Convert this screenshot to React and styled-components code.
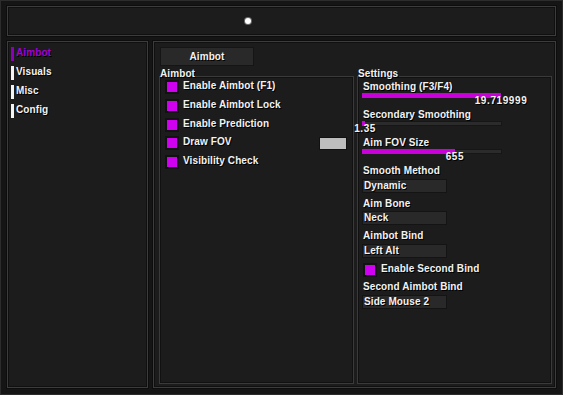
import React from "react";
//Styling
import styled, { createGlobalStyle } from "styled-components";

//Data
const tabs = [
	{ name: "Aimbot", active: true },
	{ name: "Visuals" },
	{ name: "Misc" },
	{ name: "Config" },
];

const toggles = [
	{ label: "Enable Aimbot (F1)" },
	{ label: "Enable Aimbot Lock" },
	{ label: "Enable Prediction" },
	{ label: "Draw FOV", swatch: "#bdbdbd" },
	{ label: "Visibility Check" },
];

const sliders = [
	{ label: "Smoothing (F3/F4)", value: "19.719999", pct: 99.3 },
	{ label: "Secondary Smoothing", value: "1.35", pct: 2.2 },
	{ label: "Aim FOV Size", value: "655", pct: 66.4 },
];

const App = () => {
	return (
		<>
			<GlobalStyle />
			<Window>
				<TopBar>
					<Dot />
				</TopBar>
				<Body>
					<Sidebar>
						{tabs.map((tab) => (
							<NavItem key={tab.name} $active={tab.active}>
								<NavMark $active={tab.active} />
								<span>{tab.name}</span>
							</NavItem>
						))}
					</Sidebar>
					<Main>
						<TabButton>Aimbot</TabButton>
						<Columns>
							<Group>
								<GroupTitle>Aimbot</GroupTitle>
								<GroupBox $pad="3px 6px 0 5px">
									{toggles.map((t) => (
										<CheckRow key={t.label}>
											<Check />
											<Text>{t.label}</Text>
											{t.swatch && <Swatch $color={t.swatch} />}
										</CheckRow>
									))}
								</GroupBox>
							</Group>
							<Group>
								<GroupTitle>Settings</GroupTitle>
								<GroupBox $pad="4px 4px 0 4px">
									{sliders.map((s) => (
										<SliderItem key={s.label}>
											<Text $ml="1px">{s.label}</Text>
											<Track>
												<Fill style={{ width: `${s.pct}%` }} />
												<Value style={{ left: `${s.pct}%` }}>{s.value}</Value>
											</Track>
										</SliderItem>
									))}
									<Field>
										<Text $ml="1px">Smooth Method</Text>
										<Combo>Dynamic</Combo>
									</Field>
									<Field>
										<Text $ml="1px">Aim Bone</Text>
										<Combo>Neck</Combo>
									</Field>
									<Field>
										<Text $ml="1px">Aimbot Bind</Text>
										<Combo>Left Alt</Combo>
									</Field>
									<CheckRow $tight>
										<Check $ml="1px" />
										<Text>Enable Second Bind</Text>
									</CheckRow>
									<Field>
										<Text $ml="1px">Second Aimbot Bind</Text>
										<Combo>Side Mouse 2</Combo>
									</Field>
								</GroupBox>
							</Group>
						</Columns>
					</Main>
				</Body>
			</Window>
		</>
	);
};

const GlobalStyle = createGlobalStyle`
	html, body {
		margin: 0;
		padding: 0;
		background: #151515;
	}
	* {
		box-sizing: border-box;
	}
`;

const Window = styled.div`
	width: 563px;
	height: 395px;
	border: 1px solid #2c2c2c;
	padding: 5px 6px 6px 6px;
	display: flex;
	flex-direction: column;
	gap: 5px;
	background: #151515;
	font-family: "Liberation Sans", Arial, sans-serif;
	font-weight: bold;
	font-size: 10px;
	letter-spacing: 0.1px;
	color: #f2f2f2;
`;

const Panel = styled.div`
	background: #1c1c1c;
	border: 1px solid #3c3c3c;
	box-shadow: inset 0 0 0 1px #101010, 0 0 0 1px #0d0d0d;
`;

const TopBar = styled(Panel)`
	height: 30px;
	display: flex;
	align-items: center;
`;

const Dot = styled.div`
	width: 6px;
	height: 6px;
	margin-left: 237px;
	border-radius: 50%;
	background: #ffffff;
	box-shadow: 0 0 0 1px #6a6a6a;
`;

const Body = styled.div`
	flex: 1;
	display: flex;
	gap: 5px;
	min-height: 0;
`;

const Sidebar = styled(Panel)`
	width: 141px;
	padding: 5px 3px;
	display: flex;
	flex-direction: column;
	gap: 5px;
`;

const NavItem = styled.div`
	height: 14px;
	display: flex;
	align-items: flex-start;
	gap: 2px;
	line-height: 12px;
	color: ${(p) => (p.$active ? "#a600d6" : "#f2f2f2")};
	text-shadow: 1px 1px 0 #000;
`;

const NavMark = styled.div`
	width: 3px;
	height: 14px;
	background: ${(p) => (p.$active ? "#8e00b8" : "#f4f4f4")};
`;

const Main = styled(Panel)`
	flex: 1;
	padding: 5px 3px 3px 5px;
	display: flex;
	flex-direction: column;
`;

const TabButton = styled.div`
	width: 94px;
	height: 19px;
	margin-left: 1px;
	background: #292929;
	border: 1px solid #151515;
	text-align: center;
	line-height: 17px;
	text-shadow: 1px 1px 0 #000;
`;

const Columns = styled.div`
	flex: 1;
	margin-top: 2px;
	display: grid;
	grid-template-columns: 195px 195px;
	column-gap: 3px;
	min-height: 0;
`;

const Group = styled.div`
	display: flex;
	flex-direction: column;
`;

const GroupTitle = styled.div`
	position: relative;
	z-index: 1;
	line-height: 12px;
	margin: 0 0 -4px 1px;
	text-shadow: 1px 1px 0 #000;
`;

const GroupBox = styled.div`
	flex: 1;
	border: 1px solid #3a3a3a;
	box-shadow: inset 0 0 0 1px #111;
	padding: ${(p) => p.$pad};
	display: flex;
	flex-direction: column;
`;

const Text = styled.div`
	line-height: 12px;
	white-space: nowrap;
	margin-left: ${(p) => p.$ml || "0"};
	text-shadow: 1px 1px 0 #000;
`;

const CheckRow = styled.div`
	height: ${(p) => (p.$tight ? "14px" : "18.75px")};
	margin-bottom: ${(p) => (p.$tight ? "4.5px" : "0")};
	display: flex;
	align-items: flex-start;
	gap: 4px;
`;

const Check = styled.div`
	width: 14px;
	height: 14px;
	flex: none;
	margin-left: ${(p) => p.$ml || "0"};
	background: #d000f0;
	border: 2px solid #121212;
`;

const Swatch = styled.div`
	width: 28px;
	height: 13px;
	margin-left: auto;
	margin-top: 1px;
	background: ${(p) => p.$color};
	border: 1px solid #111;
`;

const SliderItem = styled.div`
	margin-bottom: 11px;
`;

const Track = styled.div`
	position: relative;
	width: 140px;
	height: 5px;
	background: #2b2b2b;
	box-shadow: inset 0 0 0 1px #161616;
`;

const Fill = styled.div`
	height: 100%;
	background: #c800da;
`;

const Value = styled.div`
	position: absolute;
	top: 2px;
	transform: translateX(-50%);
	line-height: 12px;
	letter-spacing: 0.6px;
	white-space: nowrap;
	text-shadow: 1px 1px 0 #000;
`;

const Field = styled.div`
	margin-bottom: 5px;
`;

const Combo = styled.div`
	width: 85px;
	height: 14px;
	margin-top: 1.5px;
	padding-left: 1px;
	background: #292929;
	border: 1px solid #141414;
	line-height: 12px;
	text-shadow: 1px 1px 0 #000;
	white-space: nowrap;
`;

export default App;
